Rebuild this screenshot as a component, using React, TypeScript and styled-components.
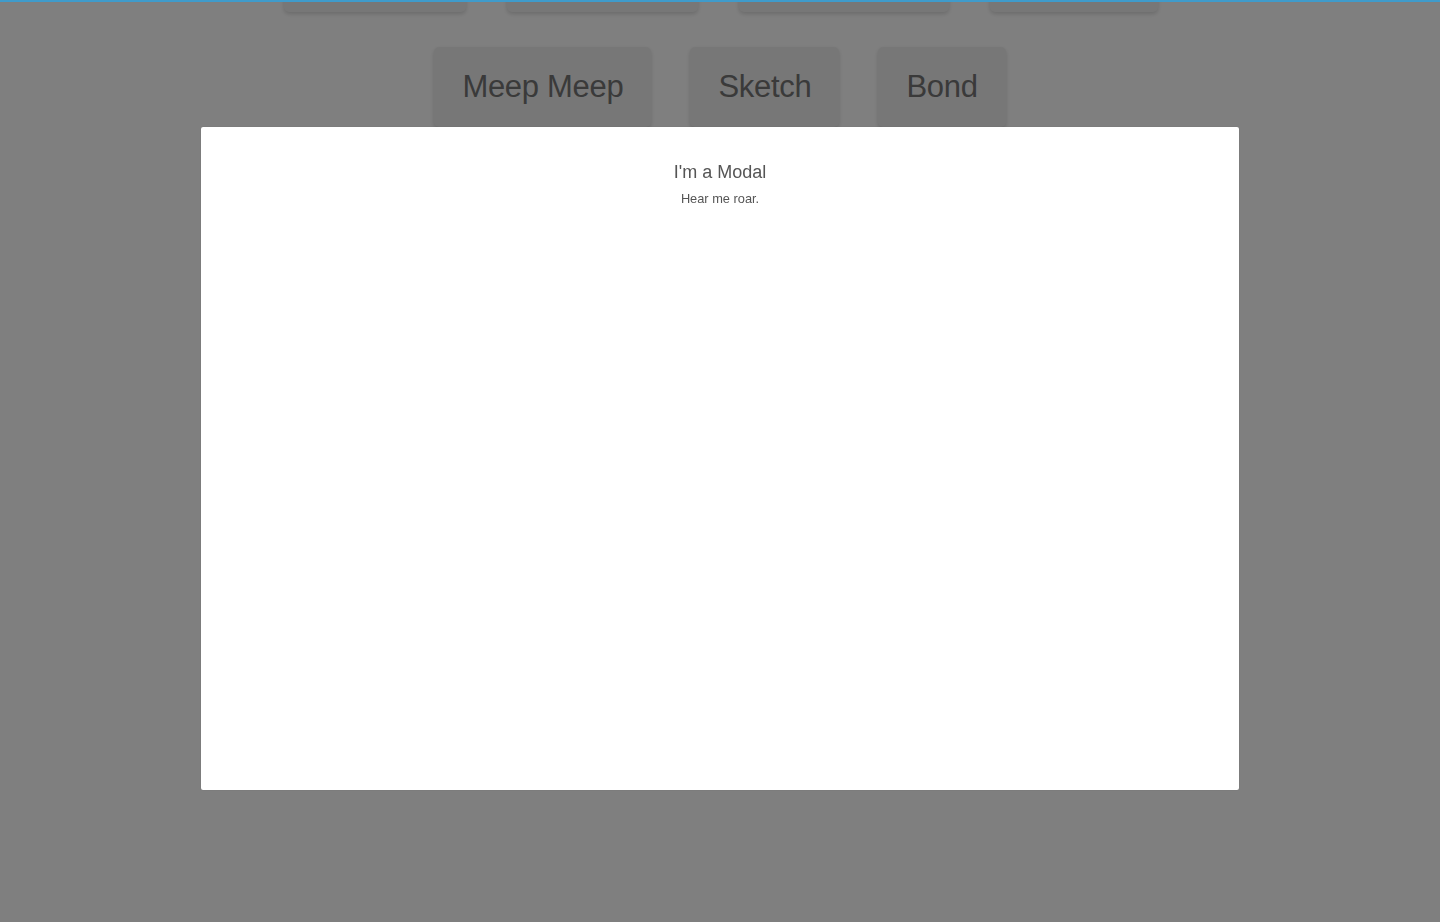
import React from "react";
import styled, { createGlobalStyle } from "styled-components";

const Global = createGlobalStyle`
  html, body { margin: 0; padding: 0; background: #ffffff; overflow: hidden; }
  body { font-family: "Liberation Sans", Arial, sans-serif; }
`;

const Page = styled.div`
  height: 922px;
  display: flex;
  flex-direction: column;
  align-items: center;
  gap: 35px;
  margin-top: -68px;
`;

const Row = styled.div<{ $gap: number; $shift?: number }>`
  display: flex;
  justify-content: center;
  gap: ${(p) => p.$gap}px;
  margin-left: ${(p) => p.$shift ?? 0}px;
`;

const DemoButton = styled.button<{ $w?: number }>`
  height: 80px;
  ${(p) => (p.$w ? `width: ${p.$w}px;` : "")}
  padding: 0 28px;
  border: none;
  border-radius: 5px;
  background: #efefef;
  color: #747474;
  font-family: "Liberation Sans", Arial, sans-serif;
  font-size: 31px;
  letter-spacing: -0.3px;
  box-shadow: 0 2px 4px rgba(0, 0, 0, 0.16);
  cursor: pointer;
`;

const TopLine = styled.div`
  position: fixed;
  top: 0;
  left: 0;
  right: 0;
  height: 2px;
  background: #3f9bcb;
  z-index: 20;
`;

const Overlay = styled.div`
  position: fixed;
  inset: 0;
  background: rgba(0, 0, 0, 0.5);
  z-index: 10;
`;

const Dialog = styled.div`
  position: fixed;
  left: 201px;
  top: 127px;
  width: 1038px;
  height: 663px;
  box-sizing: border-box;
  background: #ffffff;
  border-radius: 2px;
  box-shadow: 0 0 1px rgba(0, 0, 0, 0.25);
  display: flex;
  flex-direction: column;
  align-items: center;
  padding-top: 34px;
  z-index: 11;
`;

const Title = styled.h2`
  margin: 0;
  font-size: 18px;
  line-height: 22px;
  font-weight: 400;
  color: #555555;
`;

const Subtitle = styled.p`
  margin: 8px 0 0;
  font-size: 12.8px;
  line-height: 16px;
  color: #555555;
`;

export default function App() {
  return (
    <>
      <Global />
      <Page>
        <Row $gap={41} $shift={1}>
          <DemoButton $w={182} />
          <DemoButton $w={191} />
          <DemoButton $w={210} />
          <DemoButton $w={168} />
        </Row>
        <Row $gap={39}>
          <DemoButton>Meep Meep</DemoButton>
          <DemoButton>Sketch</DemoButton>
          <DemoButton>Bond</DemoButton>
        </Row>
      </Page>
      <TopLine />
      <Overlay />
      <Dialog>
        <Title>I'm a Modal</Title>
        <Subtitle>Hear me roar.</Subtitle>
      </Dialog>
    </>
  );
}
